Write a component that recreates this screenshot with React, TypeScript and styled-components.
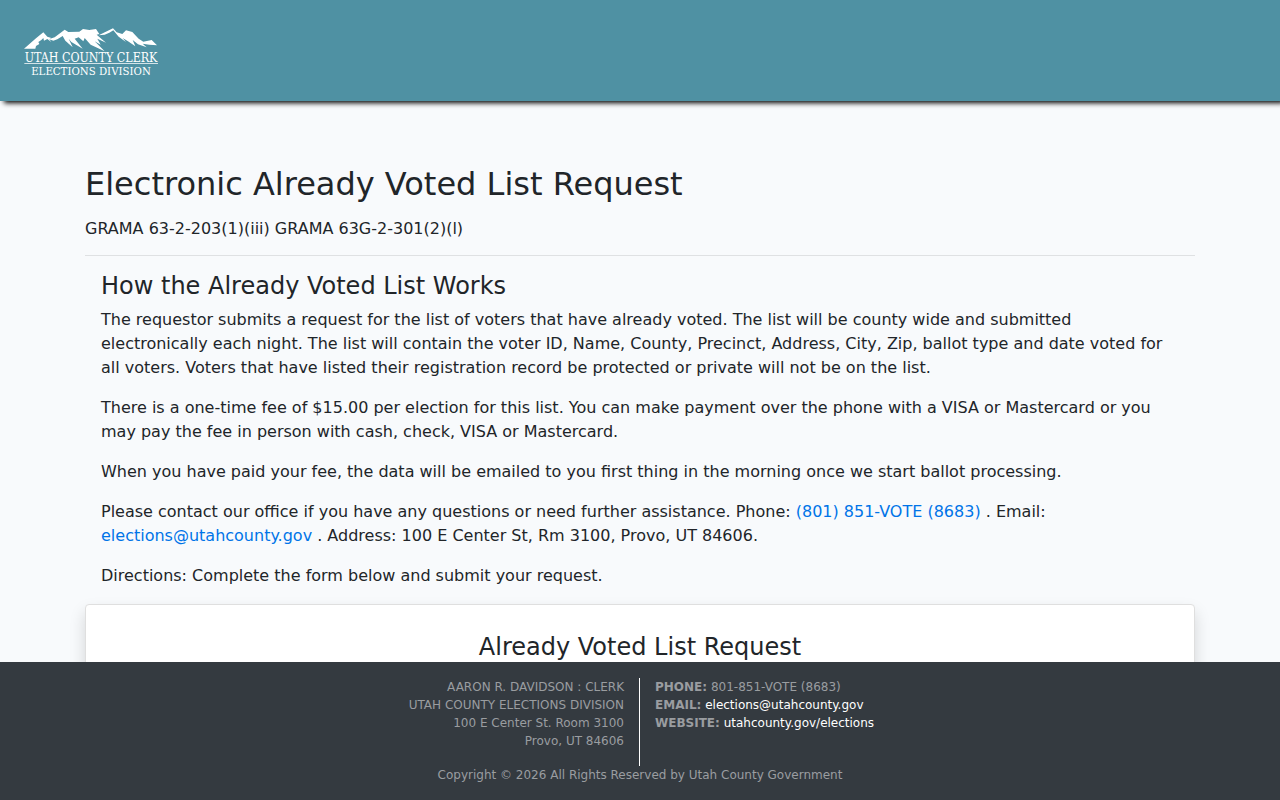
import React from "react";
import styled, { createGlobalStyle } from "styled-components";

const GlobalStyle = createGlobalStyle`
  *, *::before, *::after { box-sizing: border-box; }
  body {
    margin: 0;
    background: #f8fafc;
    color: #212529;
    font-family: "DejaVu Sans", sans-serif;
    font-size: 16px;
    line-height: 24px;
  }
`;

const Header = styled.header`
  position: relative;
  display: flex;
  align-items: flex-start;
  padding: 28px 24px 25px;
  background: #4f91a3;
  box-shadow: 4px 2px 5px #000;
`;

const Logo = styled.svg`
  display: block;
  width: 134px;
  height: 48px;
  overflow: visible;
`;

const Container = styled.main`
  max-width: 1140px;
  margin: 0 auto;
  padding: 64px 15px 170px;
`;

const Title = styled.h1`
  margin: 0 0 14px;
  font-size: 32px;
  font-weight: 500;
  line-height: 38px;
`;

const Statute = styled.p`
  margin: 0;
`;

const Rule = styled.hr`
  margin: 14px 0 16px;
  border: 0;
  border-top: 1px solid #dfe1e3;
`;

const Intro = styled.section`
  padding: 0 16px;
`;

const Heading = styled.h2`
  margin: 0 0 7px;
  font-size: 24px;
  font-weight: 500;
  line-height: 29px;
`;

const CardHeading = styled(Heading)`
  text-align: center;
`;

const Paragraph = styled.p`
  margin: 0 0 16px;
`;

const Link = styled.a`
  color: #0074e8;
  text-decoration: none;
`;

const Card = styled.section`
  padding: 28px 20px;
  background: #fff;
  border: 1px solid #dfdfdf;
  border-radius: 4px;
  box-shadow: 0 8px 16px rgba(0, 0, 0, 0.15);
`;

const Footer = styled.footer`
  position: fixed;
  right: 0;
  bottom: 0;
  left: 0;
  padding: 16px 0;
  background: #343a40;
  color: #9a9da0;
  font-size: 12px;
  line-height: 18px;
`;

const FooterColumns = styled.div`
  display: grid;
  grid-template-columns: 1fr 1fr;
`;

const FooterColumn = styled.address<{ $divided?: boolean }>`
  padding: 0 15px 16px;
  font-style: normal;
  text-align: ${(p) => (p.$divided ? "right" : "left")};
  border-right: ${(p) => (p.$divided ? "1px solid #fff" : "0")};
`;

const FooterLink = styled.a`
  color: #fff;
  text-decoration: none;
`;

const Copyright = styled.p`
  margin: 0;
  text-align: center;
`;

function CountyLogo() {
  return (
    <Logo viewBox="24 24 402 144" role="img" aria-label="Utah County Clerk Elections Division">
      <g fill="#fff">
        <path d="M24 86 L60 55 L82 37 L94 50 L106 54 L100 58 L106 66 L94 57 L84 62 L82 54 L76 60 L67 66 L70 72 L60 78 L58 86 Z" />
        <path d="M98 58 L116 52 L146 29 L157 36 L190 35 L201 27 L220 30 L240 27 L250 42 L242 44 L270 68 L244 56 L254 74 L236 64 L266 94 L224 74 L206 54 L202 64 L188 52 L176 56 L200 86 L166 66 L158 56 L170 82 L148 62 L140 48 L124 58 L112 62 L106 60 Z" />
        <path d="M248 46 L291 25 L302 37 L319 42 L330 31 L349 36 L368 56 L382 65 L407 60 L423 76 L400 74 L380 71 L392 82 L366 73 L350 60 L358 79 L336 64 L320 54 L330 66 L308 50 L292 31 L280 38 L266 44 Z" />
        <path d="M25 130 H426 V132 H25 Z" />
        <g fontFamily="'DejaVu Serif Condensed', 'Liberation Serif', serif" textAnchor="middle">
          <text x="225" y="126" fontSize="37">UTAH COUNTY CLERK</text>
          <text x="225" y="165" fontSize="34">ELECTIONS DIVISION</text>
        </g>
      </g>
    </Logo>
  );
}

export default function App() {
  return (
    <>
      <GlobalStyle />
      <Header>
        <CountyLogo />
      </Header>
      <Container>
        <Title>Electronic Already Voted List Request</Title>
        <Statute>GRAMA 63-2-203(1)(iii) GRAMA 63G-2-301(2)(l)</Statute>
        <Rule />
        <Intro>
          <Heading>How the Already Voted List Works</Heading>
          <Paragraph>
            The requestor submits a request for the list of voters that have already voted. The list
            will be county wide and submitted electronically each night. The list will contain the
            voter ID, Name, County, Precinct, Address, City, Zip, ballot type and date voted for all
            voters. Voters that have listed their registration record be protected or private will
            not be on the list.
          </Paragraph>
          <Paragraph>
            There is a one-time fee of $15.00 per election for this list. You can make payment over
            the phone with a VISA or Mastercard or you may pay the fee in person with cash, check,
            VISA or Mastercard.
          </Paragraph>
          <Paragraph>
            When you have paid your fee, the data will be emailed to you first thing in the morning
            once we start ballot processing.
          </Paragraph>
          <Paragraph>
            Please contact our office if you have any questions or need further assistance. Phone:{" "}
            <Link href="tel:8018518683">(801) 851-VOTE (8683)</Link> . Email:{" "}
            <Link href="mailto:elections@utahcounty.gov">elections@utahcounty.gov</Link> . Address:
            100 E Center St, Rm 3100, Provo, UT 84606.
          </Paragraph>
          <Paragraph>Directions: Complete the form below and submit your request.</Paragraph>
        </Intro>
        <Card>
          <CardHeading>Already Voted List Request</CardHeading>
        </Card>
      </Container>
      <Footer>
        <FooterColumns>
          <FooterColumn $divided>
            AARON R. DAVIDSON : CLERK
            <br />
            UTAH COUNTY ELECTIONS DIVISION
            <br />
            100 E Center St. Room 3100
            <br />
            Provo, UT 84606
          </FooterColumn>
          <FooterColumn>
            <strong>PHONE:</strong> 801-851-VOTE (8683)
            <br />
            <strong>EMAIL:</strong>{" "}
            <FooterLink href="mailto:elections@utahcounty.gov">elections@utahcounty.gov</FooterLink>
            <br />
            <strong>WEBSITE:</strong>{" "}
            <FooterLink href="https://utahcounty.gov/elections">utahcounty.gov/elections</FooterLink>
          </FooterColumn>
        </FooterColumns>
        <Copyright>Copyright © 2026 All Rights Reserved by Utah County Government</Copyright>
      </Footer>
    </>
  );
}
